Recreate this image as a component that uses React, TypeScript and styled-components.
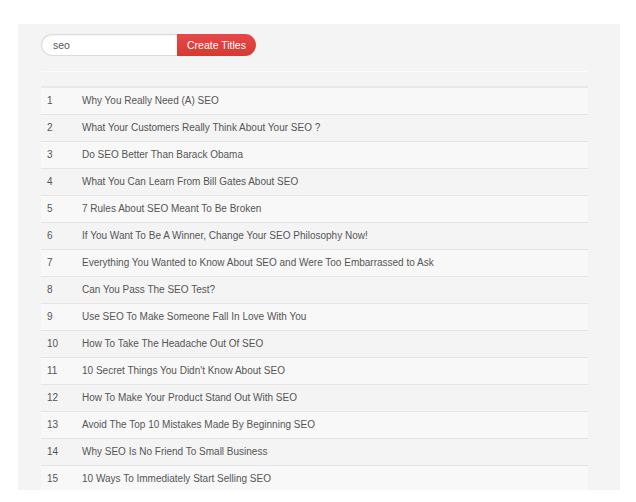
import React from 'react';
import styled, { createGlobalStyle } from 'styled-components';

const GlobalStyle = createGlobalStyle`
  html, body {
    margin: 0;
    padding: 0;
    background: #ffffff;
    font-family: "Liberation Sans", Arial, sans-serif;
  }
`;

const Page = styled.div`
  padding: 24px 16px 0 18px;
  height: 502px;
  box-sizing: border-box;
`;

const Panel = styled.div`
  background: #f4f4f4;
  width: 602px;
  height: 466px;
  padding: 10px 32px 0 23px;
  box-sizing: border-box;
  overflow: hidden;
`;

const SearchGroup = styled.form`
  display: flex;
  margin: 0;
  height: 22px;
`;

const SearchInput = styled.input`
  width: 136px;
  height: 22px;
  box-sizing: border-box;
  border: 1px solid #dcdcdc;
  border-right: none;
  border-radius: 11px 0 0 11px;
  background: #ffffff;
  padding: 0 0 0 11px;
  font-family: "Liberation Sans", Arial, sans-serif;
  font-size: 10.5px;
  color: #555;
  outline: none;
  box-shadow: inset 0 1px 1px rgba(0, 0, 0, 0.05);
`;

const CreateButton = styled.button`
  width: 79px;
  height: 22px;
  border: none;
  border-radius: 0 11px 11px 0;
  background: linear-gradient(#e8474a, #d63a2f);
  color: #ffffff;
  font-family: "Liberation Sans", Arial, sans-serif;
  font-size: 10.5px;
  padding: 0 0 1px;
  cursor: pointer;
`;

const Divider = styled.hr`
  border: none;
  border-top: 1px solid #fbfbfb;
  margin: 15px 0 14px;
  height: 0;
`;

const Table = styled.table`
  width: 100%;
  border-collapse: collapse;
  border-top: 2px solid #e9e9e9;
`;

const Row = styled.tr<{ $odd: boolean }>`
  background: ${(p) => (p.$odd ? '#f8f8f8' : '#f4f4f4')};
  border-bottom: 1px solid #e4e4e4;
  height: 27px;
`;

const NumCell = styled.td`
  width: 35px;
  padding: 0 0 1px 6px;
  font-size: 10px;
  color: #555;
  vertical-align: middle;
`;

const TitleCell = styled.td`
  padding: 0 0 1px;
  font-size: 10px;
  color: #555;
  vertical-align: middle;
`;

const titles = [
  'Why You Really Need (A) SEO',
  'What Your Customers Really Think About Your SEO ?',
  'Do SEO Better Than Barack Obama',
  'What You Can Learn From Bill Gates About SEO',
  '7 Rules About SEO Meant To Be Broken',
  'If You Want To Be A Winner, Change Your SEO Philosophy Now!',
  'Everything You Wanted to Know About SEO and Were Too Embarrassed to Ask',
  'Can You Pass The SEO Test?',
  'Use SEO To Make Someone Fall In Love With You',
  'How To Take The Headache Out Of SEO',
  "10 Secret Things You Didn't Know About SEO",
  'How To Make Your Product Stand Out With SEO',
  'Avoid The Top 10 Mistakes Made By Beginning SEO',
  'Why SEO Is No Friend To Small Business',
  '10 Ways To Immediately Start Selling SEO',
];

const App = () => (
  <>
    <GlobalStyle />
    <Page>
      <Panel>
        <SearchGroup onSubmit={(e) => e.preventDefault()}>
          <SearchInput defaultValue="seo" />
          <CreateButton type="submit">Create Titles</CreateButton>
        </SearchGroup>
        <Divider />
        <Table>
          <tbody>
            {titles.map((t, i) => (
              <Row key={t} $odd={i % 2 === 0}>
                <NumCell>{i + 1}</NumCell>
                <TitleCell>{t}</TitleCell>
              </Row>
            ))}
          </tbody>
        </Table>
      </Panel>
    </Page>
  </>
);

export default App;
